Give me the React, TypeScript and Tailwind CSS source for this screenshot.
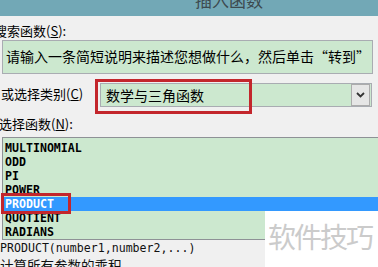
const cjk = "font-['Noto_Sans_CJK_SC','Noto_Sans',sans-serif]"
const mono = "font-['DejaVu_Sans_Mono','Noto_Sans_CJK_SC',monospace]"

const functions = ['MULTINOMIAL', 'ODD', 'PI', 'POWER', 'PRODUCT', 'QUOTIENT', 'RADIANS']

function Chevron() {
  return (
    <svg width="9" height="6" viewBox="0 0 9 6" fill="none">
      <path d="M1 1l3.5 3.5L8 1" stroke="#333" strokeWidth="1.8" />
    </svg>
  )
}

export default function App() {
  return (
    <div className={`relative w-[378px] h-[267px] overflow-hidden bg-[#f0f0f0] text-black ${cjk}`}>
      {/* title bar */}
      <div className="h-[16px] overflow-hidden bg-[#72a8b6]">
        <div className="-mt-[9px] pl-[195px] text-[17px] leading-[17px] text-[#3d4a4f]">插入函数</div>
      </div>

      <div className="mt-[7px] -ml-[6px] h-[16px] text-[13px] leading-[16px]">
        搜索函数(<span className="underline">S</span>):
      </div>

      {/* search box */}
      <div className="mt-[1px] ml-[2px] w-[371px] h-[34px] border border-[#a9acb2] bg-[#cce8cf] pl-[3px] pt-[5px] text-[14px] leading-[20px] whitespace-nowrap">
        请输入一条简短说明来描述您想做什么，然后单击“转到”
      </div>

      {/* category row */}
      <div className="relative mt-[5px] flex h-[35px] items-start">
        <div className="w-[95px] pl-[1px] pt-[7px] text-[13px] leading-[16px] whitespace-nowrap">
          或选择类别(<span className="underline">C</span>)
        </div>
        <div className="ml-[5px] mt-[4px] flex h-[24px] w-[272px] items-center border border-[#a9acb2] bg-[#cce8cf]">
          <span className="flex-1 pl-[5px] text-[14px] leading-[20px]">数学与三角函数</span>
          <span className="mr-[1px] flex h-[22px] w-[19px] items-center justify-center border border-[#acacac] bg-[#e6e6e6]">
            <Chevron />
          </span>
        </div>
        <div className="absolute left-[95px] top-0 h-[35px] w-[157px] border-[3px] border-[#c3262c]" />
      </div>

      <div className="-ml-[1px] h-[23px] pt-[2px] text-[13px] leading-[16px]">
        选择函数(<span className="underline">N</span>):
      </div>

      {/* function list */}
      <div className={`relative ml-[2px] border-y border-l border-[#8e9196] bg-[#cce8cf] pt-[3px] ${mono} text-[11.6px] font-bold`}>
        {functions.map((name) => (
          <div
            key={name}
            className={`h-[14px] pl-[2px] leading-[14px] ${name === 'PRODUCT' ? 'bg-[#3399ff] text-white' : ''}`}
          >
            {name}
          </div>
        ))}
        <div className="absolute -left-[2px] top-[55px] h-[21px] w-[70px] border-[3px] border-[#c3262c]" />
      </div>

      {/* description */}
      <div className="pt-[1px] text-[#111]">
        <div className={`${mono} text-[11.6px] leading-[15px]`}>PRODUCT(number1,number2,...)</div>
        <div className="text-[13.5px] leading-[18px]">计算所有参数的乘积</div>
      </div>

      {/* watermark */}
      <div className="absolute left-[265px] top-[211px] h-[56px] w-[113px] bg-white pl-[3px] pt-[9px]">
        <span className="text-[28px] leading-[32px] tracking-[-2px] text-[#cbcbcb]">软件技巧</span>
      </div>
    </div>
  )
}
